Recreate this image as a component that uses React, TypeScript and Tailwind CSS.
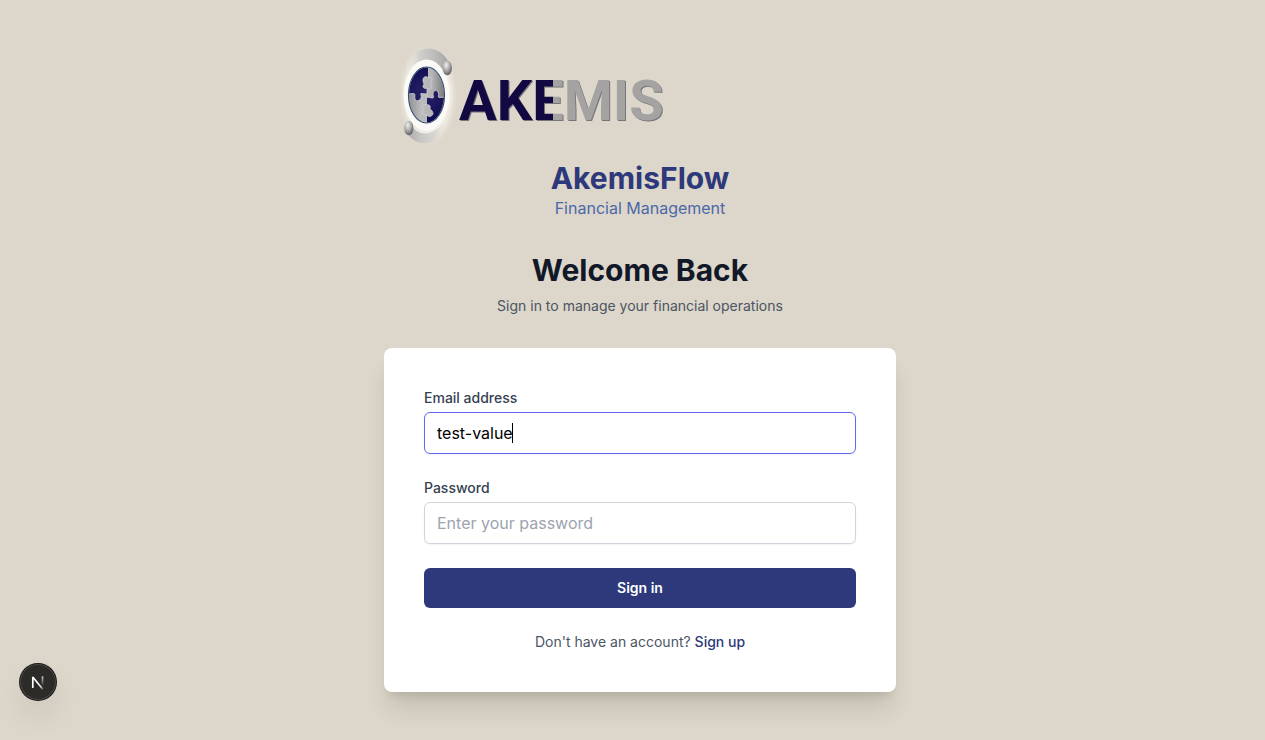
import { useEffect, useRef, useState } from "react";

function AkemisLogo() {
  return (
    <svg viewBox="0 0 288 96" className="h-24 w-72" role="img" aria-label="Akemis">
      <defs>
        <radialGradient id="halo">
          <stop offset="0.6" stopColor="#f8f7f2" />
          <stop offset="0.78" stopColor="#eeebe2" stopOpacity="0.8" />
          <stop offset="1" stopColor="#ddd6ca" stopOpacity="0" />
        </radialGradient>
        <linearGradient id="topArc" x1="0" y1="0.5" x2="1" y2="0.5">
          <stop offset="0" stopColor="#efede7" stopOpacity="0.2" />
          <stop offset="0.3" stopColor="#d0cfcb" />
          <stop offset="0.65" stopColor="#bdbcba" />
          <stop offset="1" stopColor="#a2a2a2" />
        </linearGradient>
        <linearGradient id="bottomArc" x1="0" y1="0.5" x2="1" y2="0.5">
          <stop offset="0" stopColor="#a8a8a8" />
          <stop offset="0.4" stopColor="#c9c8c5" />
          <stop offset="0.75" stopColor="#dad8d2" />
          <stop offset="1" stopColor="#efede7" stopOpacity="0.2" />
        </linearGradient>
        <radialGradient id="ball" cx="0.38" cy="0.3" r="0.8">
          <stop offset="0" stopColor="#f0f0f0" />
          <stop offset="0.45" stopColor="#adadad" />
          <stop offset="1" stopColor="#4c4c4c" />
        </radialGradient>
        <radialGradient id="navy" gradientUnits="userSpaceOnUse" cx="42" cy="45" r="28">
          <stop offset="0" stopColor="#292569" />
          <stop offset="1" stopColor="#110a50" />
        </radialGradient>
        <linearGradient id="silver" x1="0" y1="0" x2="1" y2="0">
          <stop offset="0" stopColor="#8f8f93" />
          <stop offset="0.35" stopColor="#bcbcbd" />
          <stop offset="0.65" stopColor="#b4b4b5" />
          <stop offset="1" stopColor="#77777c" />
        </linearGradient>
        <linearGradient id="wordmark" gradientUnits="userSpaceOnUse" x1="76" y1="0" x2="276" y2="0">
          <stop offset="0.465" stopColor="#130942" />
          <stop offset="0.465" stopColor="#a4a3a2" />
        </linearGradient>
        <clipPath id="oval">
          <ellipse cx="42.5" cy="47" rx="17.5" ry="27.5" />
        </clipPath>
      </defs>
      <ellipse cx="44" cy="47" rx="31" ry="54" fill="url(#halo)" />
      <path d="M22 15C33-4 57-5 66 17L60 25C53 9 36 6 24 27Z" fill="url(#topArc)" />
      <path d="M26 75C34 91 51 88 62 71C63 94 36 105 22 84Z" fill="url(#bottomArc)" />
      <ellipse cx="42.5" cy="47" rx="23" ry="35.5" fill="#fbfaf7" />
      <ellipse cx="63.3" cy="20" rx="4.6" ry="7.3" fill="url(#ball)" />
      <ellipse cx="24.8" cy="80" rx="4.6" ry="7.3" fill="url(#ball)" />
      <g clipPath="url(#oval)" stroke="#d0d0d8" strokeWidth="0.8">
        <rect x="24" y="18" width="37" height="58" fill="url(#silver)" stroke="none" />
        <path
          d="M23 17H44.5V30C43 28 39 28 39 32C39 35 40 35 40 37C38 37 39 42 43 40V46L37 45.5C36 46 38 48 37 50C36 53 32 54 31 51C30 48 32 47 30 45.5L23 46Z"
          fill="url(#navy)"
        />
        <path
          d="M62 49L55 49.5C53 49 56 47 54 44C52 41 49 43 49 46C49 48 51 50 48 50L42.5 49V57C45 56 47 58 46 60C46 62 49 62 49 66C48 69 44 69 42.5 67V77H62Z"
          fill="url(#navy)"
        />
        <path d="M44.5 30C48 28 49 31 47 35C46 38 48 38 47 40C46 42 43 41 43 40M43 46V49M42.5 57C38 55 37 59 40 61C37 64 39 68 42.5 67" fill="none" />
      </g>
      <ellipse cx="42.5" cy="47" rx="18" ry="28" fill="none" stroke="#34506f" strokeWidth="1.2" />
      <g fontSize="56" fontWeight="700" className="font-['Roboto',sans-serif]">
        <text x="76" y="73" fill="#77757c">AKEMIS</text>
        <text x="75" y="72" fill="url(#wordmark)" aria-hidden="true">AKEMIS</text>
      </g>
    </svg>
  );
}

function DevBadge() {
  return (
    <button
      type="button"
      aria-label="Open developer tools"
      className="fixed bottom-10 left-5 flex size-9 items-center justify-center rounded-full bg-[#2c2b28] shadow-[0_0_0_1px_#171717,inset_0_0_0_1px_rgba(255,255,255,0.14),0_16px_32px_-8px_rgba(0,0,0,0.24)]"
    >
      <svg viewBox="0 0 36 36" className="size-9" fill="none" strokeWidth="1.7">
        <defs>
          <linearGradient id="diag" gradientUnits="userSpaceOnUse" x1="18" y1="18" x2="23.5" y2="25.5">
            <stop stopColor="#fff" />
            <stop offset="0.6" stopColor="#fff" stopOpacity="0.8" />
            <stop offset="1" stopColor="#fff" stopOpacity="0.1" />
          </linearGradient>
          <linearGradient id="stem" gradientUnits="userSpaceOnUse" x1="22" y1="12" x2="22" y2="22">
            <stop stopColor="#fff" stopOpacity="0.8" />
            <stop offset="1" stopColor="#fff" stopOpacity="0" />
          </linearGradient>
        </defs>
        <path d="M23 25.5L12.8 13V24" stroke="url(#diag)" strokeLinejoin="bevel" />
        <path d="M22.5 12.3V23.8" stroke="url(#stem)" />
      </svg>
    </button>
  );
}

const field =
  "block w-full rounded-md border border-[#d1d5db] bg-white px-3 py-2 text-base text-black shadow-xs outline-none placeholder:text-[#9ca3af] focus:border-[#6366f1]";

function EmailField() {
  const input = useRef<HTMLInputElement>(null);
  const [caret, setCaret] = useState<number | null>(null);

  const placeCaret = () => {
    const el = input.current;
    const context = document.createElement("canvas").getContext("2d");
    if (!el || !context) return;
    const style = getComputedStyle(el);
    context.font = `${style.fontWeight} ${style.fontSize} ${style.fontFamily}`;
    const before = el.value.slice(0, el.selectionStart ?? el.value.length);
    const start = parseFloat(style.paddingLeft) + parseFloat(style.borderLeftWidth);
    setCaret(Math.floor(start + context.measureText(before).width - el.scrollLeft));
  };

  useEffect(() => {
    const el = input.current;
    if (!el) return;
    el.focus();
    el.setSelectionRange(el.value.length, el.value.length);
    placeCaret();
  }, []);

  return (
    <div className="relative mt-1">
      <input
        ref={input}
        id="email"
        name="email"
        type="text"
        inputMode="email"
        defaultValue="test-value"
        onChange={placeCaret}
        onSelect={placeCaret}
        onFocus={placeCaret}
        onBlur={() => setCaret(null)}
        className={`${field} caret-transparent`}
      />
      {caret !== null && (
        <span className="pointer-events-none absolute inset-y-0 my-auto h-5 w-px bg-black" style={{ left: caret }} />
      )}
    </div>
  );
}

export default function App() {
  return (
    <main className="flex min-h-screen flex-col items-center justify-center bg-[#ddd6ca] py-12 pl-[15px] font-['Inter',sans-serif]">
      <div className="w-full max-w-lg">
        <AkemisLogo />
        <header className="mt-4 text-center">
          <h1 className="text-3xl font-bold text-[#2d397a]">AkemisFlow</h1>
          <p className="text-base text-[#4a69a9]">Financial Management</p>
          <h2 className="mt-8 text-3xl font-bold text-[#111827]">Welcome Back</h2>
          <p className="mt-2 text-sm text-[#4b5563]">Sign in to manage your financial operations</p>
        </header>
        <form
          onSubmit={(event) => event.preventDefault()}
          className="mt-8 space-y-6 rounded-lg bg-white p-10 shadow-[0_20px_25px_-5px_rgba(30,50,20,0.14),0_8px_10px_-6px_rgba(30,50,20,0.14)]"
        >
          <div>
            <label htmlFor="email" className="block text-sm font-medium text-[#374151]">
              Email address
            </label>
            <EmailField />
          </div>
          <div>
            <label htmlFor="password" className="mb-1 block text-sm font-medium text-[#374151]">
              Password
            </label>
            <input id="password" name="password" type="password" placeholder="Enter your password" className={field} />
          </div>
          <button type="submit" className="block w-full rounded-md bg-[#2d397a] px-4 py-2.5 text-sm font-semibold text-white">
            Sign in
          </button>
          <p className="text-center text-sm text-[#4b5563]">
            Don't have an account?{" "}
            <a href="#signup" className="font-medium text-[#2d397a]">
              Sign up
            </a>
          </p>
        </form>
      </div>
      <DevBadge />
    </main>
  );
}
